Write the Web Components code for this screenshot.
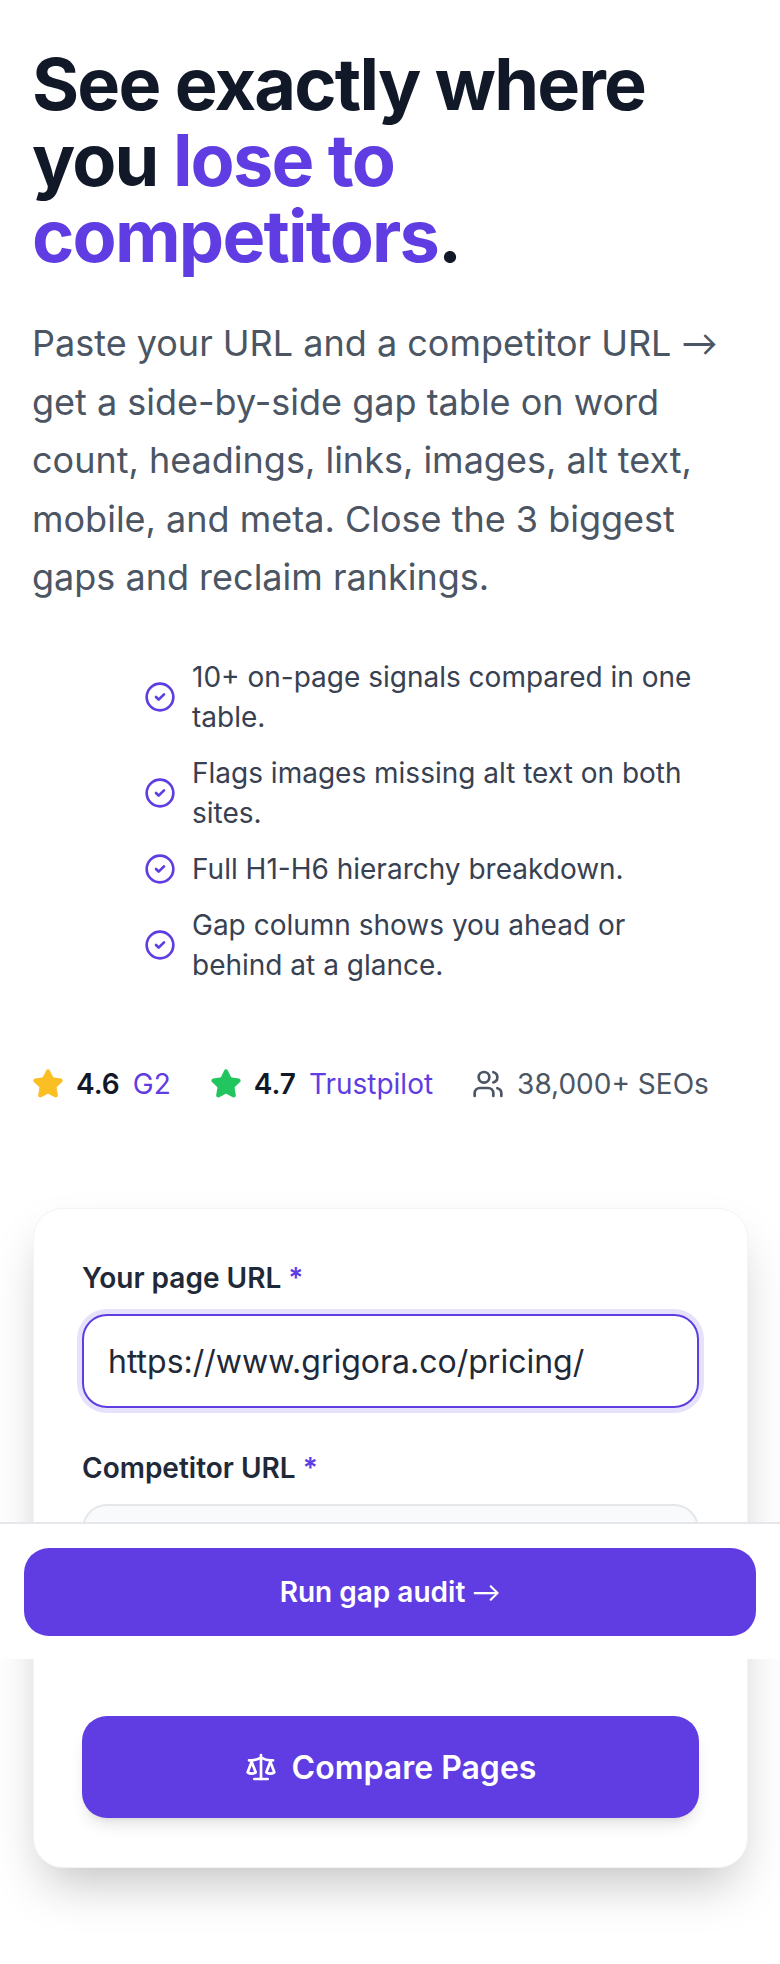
<!DOCTYPE html>
<html lang="en">
<head>
<meta charset="utf-8">
<title>Gap audit</title>
<style>
  html, body { margin: 0; background: #fff; }
  body { font-family: Inter, "Noto Sans", sans-serif; position: relative; height: 1964px; overflow: hidden; }
</style>
</head>
<body>
<gap-page>
  <gap-hero>
    <span slot="title">See exactly where you <hero-accent>lose to competitors</hero-accent>.</span>
    Paste your URL and a competitor URL <thin-arrow>→</thin-arrow> get a side-by-side gap table on word count, headings, links, images, alt text, mobile, and meta. Close the 3 biggest gaps and reclaim rankings.
  </gap-hero>
  <check-list>
    <check-item>10+ on-page signals compared in one table.</check-item>
    <check-item>Flags images missing alt text on both sites.</check-item>
    <check-item>Full H1-H6 hierarchy breakdown.</check-item>
    <check-item>Gap column shows you ahead or behind at a glance.</check-item>
  </check-list>
  <trust-row></trust-row>
  <compare-card>
    <url-field label="Your page URL" focused>https://www.grigora.co/pricing/</url-field>
    <url-field label="Competitor URL"></url-field>
  </compare-card>
</gap-page>
<sticky-cta>Run gap audit <thin-arrow>→</thin-arrow></sticky-cta>

<script>
const ICONS = {
  check: '<circle cx="12" cy="12" r="10"/><path d="m9 12 2 2 4-4"/>',
  star: '<path d="M11.525 2.295a.53.53 0 0 1 .95 0l2.31 4.679a2.123 2.123 0 0 0 1.595 1.16l5.166.756a.53.53 0 0 1 .294.904l-3.736 3.638a2.123 2.123 0 0 0-.611 1.878l.882 5.14a.53.53 0 0 1-.771.56l-4.618-2.428a2.122 2.122 0 0 0-1.973 0L6.396 21.01a.53.53 0 0 1-.77-.56l.881-5.139a2.122 2.122 0 0 0-.611-1.879L2.16 9.795a.53.53 0 0 1 .294-.906l5.165-.755a2.122 2.122 0 0 0 1.597-1.16z"/>',
  users: '<path d="M16 21v-2a4 4 0 0 0-4-4H6a4 4 0 0 0-4 4v2"/><circle cx="9" cy="7" r="4"/><path d="M22 21v-2a4 4 0 0 0-3-3.87"/><path d="M16 3.13a4 4 0 0 1 0 7.75"/>',
  scale: '<path d="m16 16 3-8 3 8c-.87.65-1.92 1-3 1s-2.13-.35-3-1Z"/><path d="m2 16 3-8 3 8c-.87.65-1.92 1-3 1s-2.13-.35-3-1Z"/><path d="M7 21h10"/><path d="M12 3v18"/><path d="M3 7h2c2 0 5-1 7-2 2 1 5 2 7 2h2"/>'
};
const icon = (name, size, extra = '') =>
  `<svg xmlns="http://www.w3.org/2000/svg" width="${size}" height="${size}" viewBox="0 0 24 24" fill="none" stroke="currentColor" stroke-width="2" stroke-linecap="round" stroke-linejoin="round" ${extra}>${ICONS[name]}</svg>`;

class Base extends HTMLElement {
  connectedCallback() {
    if (this.shadowRoot) return;
    this.attachShadow({ mode: 'open' });
    this.shadowRoot.innerHTML = this.render();
  }
}

class GapPage extends Base {
  render() {
    return `<style>
      :host { display: block; padding: 46px 32px 0; }
    </style><slot></slot>`;
  }
}

class GapHero extends Base {
  render() {
    return `<style>
      :host { display: block; }
      h1 { margin: 0; font-size: 72px; line-height: 76px; font-weight: 700; letter-spacing: -0.025em; color: #111827; }
      ::slotted(span) { display: block; }
      p { margin: 40px 0 0; font-size: 36px; line-height: 58.5px; color: #4b5563; }
    </style>
    <h1><slot name="title"></slot></h1>
    <p><slot></slot></p>`;
  }
}

class HeroAccent extends Base {
  render() {
    return `<style>:host { color: #5f3de2; }</style><slot></slot>`;
  }
}

// Inter's arrow is too short, the reference has a longer one
class ThinArrow extends Base {
  render() {
    return `<style>:host { font-family: Lato, sans-serif; font-weight: 400; line-height: 1; }</style><slot></slot>`;
  }
}

class CheckList extends Base {
  render() {
    return `<style>
      :host { display: flex; flex-direction: column; gap: 16px; margin: 50.5px 0 0 112px; width: 560px; }
    </style><slot></slot>`;
  }
}

class CheckItem extends Base {
  render() {
    return `<style>
      :host { display: flex; align-items: center; gap: 16px; font-size: 28px; line-height: 40px; color: #374151; }
      svg { flex: none; color: #5f3de2; }
    </style>${icon('check', 32)}<div><slot></slot></div>`;
  }
}

class TrustRow extends Base {
  render() {
    return `<style>
      :host { display: flex; align-items: center; margin-top: 79px; font-size: 28px; line-height: 40px; color: #4b5563; }
      .rate { display: flex; align-items: center; }
      b { font-weight: 600; color: #111827; margin: 0 13px 0 12px; }
      .site { color: #5f3de2; }
      .amber { color: #fbbf24; }
      .green { color: #22c55e; }
      .amber, .green { flex: none; fill: currentColor; }
      .rate + .rate { margin-left: 39px; }
      .seo { display: flex; align-items: center; gap: 13px; margin-left: 39px; }
    </style>
    <div class="rate">${icon('star', 32, 'class="amber"')}<b>4.6</b><span class="site">G2</span></div>
    <div class="rate">${icon('star', 32, 'class="green"')}<b>4.7</b><span class="site">Trustpilot</span></div>
    <div class="seo">${icon('users', 32)}<span>38,000+ SEOs</span></div>`;
  }
}

class CompareCard extends Base {
  render() {
    return `<style>
      :host { display: block; margin: 104px 0 0 1px; background: #fff; border: 1px solid #f3f4f6; border-radius: 30px; padding: 51px 48px 49px 48px; box-shadow: 0 25px 50px -12px rgba(0,0,0,.25); }
      .fields { display: flex; flex-direction: column; gap: 42px; }
      button { margin-top: 118px; width: 100%; height: 102px; display: flex; align-items: center; justify-content: center; gap: 15px; border: 0; border-radius: 25px; background: #5f3de2; color: #fff; font: 600 32px Inter, sans-serif; box-shadow: 0 10px 15px -3px rgba(0,0,0,.1), 0 4px 6px -4px rgba(0,0,0,.1); }
    </style>
    <div class="fields"><slot></slot></div>
    <button>${icon('scale', 32)}<span>Compare Pages</span></button>`;
  }
}

class UrlField extends Base {
  render() {
    const focused = this.hasAttribute('focused');
    return `<style>
      :host { display: block; }
      label { display: block; font-size: 28px; line-height: 36px; font-weight: 600; color: #1f2937; margin-bottom: 18px; }
      i { font-style: normal; color: #5f3de2; }
      .box { box-sizing: border-box; height: 94px; display: flex; align-items: center; padding: 0 24px; font-size: 32px; color: #1f2937; border-radius: 25px; border: 2.5px solid #e5e7eb; background: #f9fafb; }
      .box.on { border-color: #5f3de2; background: #fff; box-shadow: 0 0 0 5px #e7e2fb; }
    </style>
    <label>${this.getAttribute('label')} <i>*</i></label>
    <div class="box ${focused ? 'on' : ''}"><slot></slot></div>`;
  }
}

class StickyCta extends Base {
  render() {
    return `<style>
      :host { position: absolute; top: 1522px; left: 0; right: 0; box-sizing: border-box; height: 137px; padding: 24px 24px 0; background: #fff; border-top: 2px solid #e5e7eb; }
      button { width: 100%; height: 88px; border: 0; border-radius: 25px; background: #5f3de2; color: #fff; font: 600 28px Inter, sans-serif; }
    </style><button><slot></slot></button>`;
  }
}

customElements.define('gap-page', GapPage);
customElements.define('gap-hero', GapHero);
customElements.define('hero-accent', HeroAccent);
customElements.define('thin-arrow', ThinArrow);
customElements.define('check-list', CheckList);
customElements.define('check-item', CheckItem);
customElements.define('trust-row', TrustRow);
customElements.define('compare-card', CompareCard);
customElements.define('url-field', UrlField);
customElements.define('sticky-cta', StickyCta);
</script>
</body>
</html>
